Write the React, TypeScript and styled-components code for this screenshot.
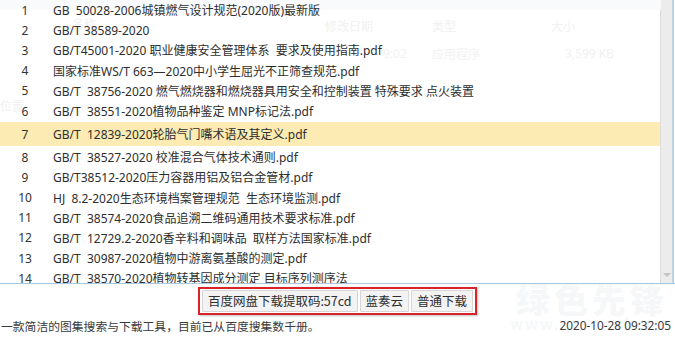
import { FC } from 'react';
import styled, { createGlobalStyle } from 'styled-components';

const GlobalStyle = createGlobalStyle`
  html, body {
    margin: 0;
    padding: 0;
    background: #ffffff;
  }
  body {
    font-family: "Noto Sans", "Noto Sans CJK SC", sans-serif;
    color: #2b2b2b;
  }
`;

const files = [
  'GB  50028-2006城镇燃气设计规范(2020版)最新版',
  'GB/T 38589-2020',
  'GB/T45001-2020 职业健康安全管理体系  要求及使用指南.pdf',
  '国家标准WS/T 663—2020中小学生屈光不正筛查规范.pdf',
  'GB/T  38756-2020 燃气燃烧器和燃烧器具用安全和控制装置 特殊要求 点火装置',
  'GB/T  38551-2020植物品种鉴定 MNP标记法.pdf',
  'GB/T  12839-2020轮胎气门嘴术语及其定义.pdf',
  'GB/T  38527-2020 校准混合气体技术通则.pdf',
  'GB/T38512-2020压力容器用铝及铝合金管材.pdf',
  'HJ  8.2-2020生态环境档案管理规范  生态环境监测.pdf',
  'GB/T  38574-2020食品追溯二维码通用技术要求标准.pdf',
  'GB/T  12729.2-2020香辛料和调味品  取样方法国家标准.pdf',
  'GB/T  30987-2020植物中游离氨基酸的测定.pdf',
  'GB/T  38570-2020植物转基因成分测定 目标序列测序法',
];

const Window = styled.div`
  width: 675px;
  height: 338px;
  overflow: hidden;
  display: flex;
  flex-direction: column;
  background: #ffffff;
`;

const ListPanel = styled.div`
  position: relative;
  height: 283px;
  flex-shrink: 0;
  display: flex;
  border-bottom: 1px solid #a9c9e2;
  overflow: hidden;
`;

const List = styled.div`
  flex: 1;
  display: flex;
  flex-direction: column;
`;

const Row = styled.div<{ $selected?: boolean }>`
  display: grid;
  grid-template-columns: 50px 1fr;
  align-items: center;
  flex-shrink: 0;
  height: ${({ $selected }) => ($selected ? '24px' : '20.2px')};
  margin: ${({ $selected }) => ($selected ? '1px 0' : '0')};
  background: ${({ $selected }) => ($selected ? '#fcebb2' : 'transparent')};
  font-size: 12px;
  white-space: pre;
  position: relative;
  z-index: 1;
`;

const Index = styled.span`
  text-align: center;
  color: #333;
`;

const Name = styled.span`
  color: #2e2e2e;
  padding-left: 3px;
`;

const Scrollbar = styled.div`
  width: 11px;
  background: #ececec;
  border-left: 1px solid #dcdcdc;
  border-right: 2px solid #b9d3ea;
  display: flex;
  flex-direction: column;
  justify-content: flex-end;
  align-items: center;
  margin-right: 1px;
`;

const ArrowDown = styled.div`
  width: 0;
  height: 0;
  border-left: 4px solid transparent;
  border-right: 4px solid transparent;
  border-top: 4px solid #c4c4c4;
  margin-bottom: 6px;
`;

const Ghost = styled.span<{ $x: number; $y: number }>`
  position: absolute;
  left: ${({ $x }) => $x}px;
  top: ${({ $y }) => $y}px;
  font-size: 12px;
  color: #f1f1f1;
  white-space: nowrap;
  z-index: 0;
`;

const GhostBand = styled.div`
  position: absolute;
  left: 0;
  top: 0;
  right: 14px;
  height: 10px;
  background: #f8fafc;
  z-index: 0;
`;

const Toolbar = styled.div`
  display: flex;
  justify-content: center;
  padding-top: 3px;
  height: 31px;
  box-sizing: border-box;
`;

const RedFrame = styled.div`
  display: flex;
  gap: 2px;
  padding: 1px 2px;
  border: 2px solid #d8232a;
  box-shadow: 1px 1px 2px rgba(0, 0, 0, 0.25);
  height: 22px;
`;

const Button = styled.button`
  font-family: "Noto Sans CJK SC", "Noto Sans", sans-serif;
  font-size: 12.5px;
  color: #2e2e2e;
  background: #f3f3f3;
  border: 1px solid #d6d6d6;
  border-radius: 1px;
  padding: 0 5px;
  height: 22px;
  line-height: 20px;
  cursor: pointer;
`;

const Footer = styled.div`
  display: flex;
  justify-content: space-between;
  align-items: center;
  padding: 0 4px 0 1px;
  height: 20px;
  font-size: 11.8px;
  color: #3a3a3a;
`;

const FooterText = styled.span`
  white-space: pre;
  position: relative;
  z-index: 1;
`;

const Watermark = styled.div`
  position: absolute;
  left: 510px;
  top: 282px;
  display: flex;
  flex-direction: column;
  align-items: center;
  pointer-events: none;
  color: rgba(215, 225, 230, 0.25);
  font-family: "Noto Sans CJK SC", sans-serif;
  line-height: 1;
`;

const WatermarkTitle = styled.span`
  font-size: 34px;
  font-weight: 900;
  letter-spacing: 4px;
`;

const WatermarkUrl = styled.span`
  font-size: 15px;
  font-weight: 700;
  letter-spacing: 2px;
`;

const App: FC = () => {
  return (
    <>
      <GlobalStyle />
      <Window>
        <ListPanel>
          <GhostBand />
          <Ghost $x={72} $y={15}>名称</Ghost>
          <Ghost $x={325} $y={17}>修改日期</Ghost>
          <Ghost $x={432} $y={17}>类型</Ghost>
          <Ghost $x={551} $y={17}>大小</Ghost>
          <Ghost $x={383} $y={45}>9:02</Ghost>
          <Ghost $x={432} $y={45}>应用程序</Ghost>
          <Ghost $x={565} $y={45}>3,599 KB</Ghost>
          <Ghost $x={0} $y={97}>位置</Ghost>
          <List>
            {files.map((name, i) => (
              <Row key={name} $selected={i === 6}>
                <Index>{i + 1}</Index>
                <Name>{name}</Name>
              </Row>
            ))}
          </List>
          <Scrollbar>
            <ArrowDown />
          </Scrollbar>
        </ListPanel>
        <Toolbar>
          <RedFrame>
            <Button>百度网盘下载提取码:57cd</Button>
            <Button>蓝奏云</Button>
            <Button>普通下载</Button>
          </RedFrame>
        </Toolbar>
        <Footer>
          <FooterText>一款简洁的图集搜索与下载工具，目前已从百度搜集数千册。</FooterText>
          <FooterText>2020-10-28 09:32:05</FooterText>
        </Footer>
      </Window>
      <Watermark>
        <WatermarkTitle>绿色先锋</WatermarkTitle>
        <WatermarkUrl>www.greenxf.com</WatermarkUrl>
      </Watermark>
    </>
  );
};

export default App;
